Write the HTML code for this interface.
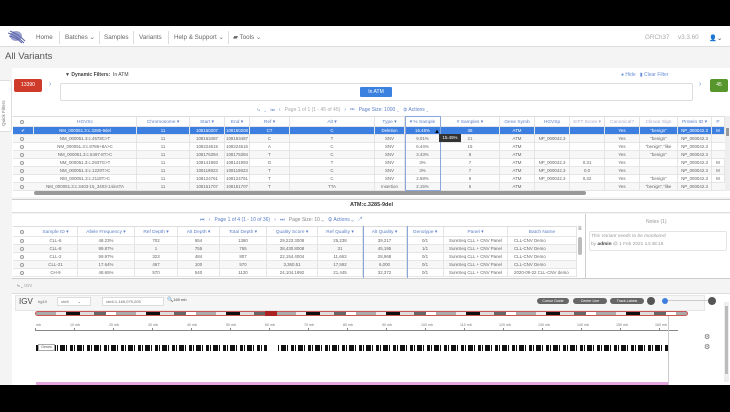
<!DOCTYPE html>
<html><head><meta charset="utf-8"><style>
*{box-sizing:border-box;margin:0;padding:0}
body{width:730px;height:412px;overflow:hidden;background:#f4f4f4;font-family:"Liberation Sans",sans-serif;position:relative;color:#555}
.a{position:absolute}
.row{position:absolute;left:13px;height:8px;border-bottom:1px solid #e6e6e6;background:#fff}
.row.alt{background:#f7f7f7}
.c{position:absolute;top:0;height:8px;font-size:4.4px;line-height:8px;text-align:center;white-space:nowrap;overflow:hidden;color:#666;border-right:1px solid #e4e4e4}
.h .c{color:#5b7fc7;height:11px;line-height:11px;font-size:4.8px}
.cb{position:absolute;left:7px;top:2px;width:4px;height:4px;border:0.6px solid #999;border-radius:50%;background:#fff}
.nav{font-size:6.3px;color:#666;top:34px}
.sep{top:31px;width:1px;height:13px;background:#ddd}
.btn{background:#666;color:#fff;border-radius:4px;font-size:3.6px;text-align:center;line-height:6px;height:6px}
.rl{position:absolute;top:323px;font-size:3.6px;color:#777}
</style></head><body>
<div class="a" style="left:0;top:0;width:730px;height:26px;background:#000"></div>
<div class="a" style="left:0;top:26px;width:730px;height:21px;background:#fff;border-bottom:1px solid #ddd"></div>
<svg class="a" style="left:6px;top:29px" width="20" height="16"><ellipse cx="10" cy="7" rx="6" ry="5" fill="#9aa0d0"/><path d="M2 4 Q10 6 18 14 M3 7 Q10 8 16 14 M4 2 Q12 5 19 12" stroke="#5a63a8" stroke-width="1" fill="none"/></svg>
<div class="a nav" style="left:36px">Home</div><div class="a sep" style="left:59px"></div>
<div class="a nav" style="left:65px">Batches ⌄</div><div class="a sep" style="left:99px"></div>
<div class="a nav" style="left:104px">Samples</div><div class="a sep" style="left:133px"></div>
<div class="a nav" style="left:139px">Variants</div><div class="a sep" style="left:168px"></div>
<div class="a nav" style="left:174px">Help &amp; Support ⌄</div><div class="a sep" style="left:228px"></div>
<div class="a nav" style="left:233px">▰ Tools ⌄</div>
<div class="a nav" style="left:645px;color:#aaa">GRCh37</div>
<div class="a nav" style="left:678px;color:#aaa">v3.3.60</div>
<div class="a nav" style="left:709px;color:#444">👤⌄</div>
<div class="a" style="left:5px;top:51px;font-size:9.5px;color:#555">All Variants</div>
<div class="a" style="left:12px;top:68px;width:718px;height:37px;background:#fff"></div>
<div class="a" style="left:0;top:80px;width:12px;height:52px;background:#fff;border:1px solid #ddd;border-left:none;border-radius:0 3px 3px 0"></div>
<div class="a" style="left:1px;top:126px;font-size:4.6px;color:#777;transform:rotate(-90deg);transform-origin:0 0;white-space:nowrap">Quick Filters</div>
<div class="a" style="left:14px;top:79px;width:28px;height:13px;background:#cf3b2b;border-radius:2px;color:#fff;font-size:5px;text-align:center;line-height:13px">13390</div>
<div class="a" style="left:49px;top:81px;font-size:7px;color:#6a9ae0">›</div>
<div class="a" style="left:65px;top:72px;font-size:5px;color:#444"><b>▼ Dynamic Filters:</b> &nbsp;In ATM</div>
<div class="a" style="left:621px;top:72px;font-size:5px;color:#6a8fd8">● Hide &nbsp; ▮ Clear Filter</div>
<div class="a" style="left:60px;top:83px;width:633px;height:18px;border:1px solid #ddd;background:#fff;border-radius:2px"></div>
<div class="a" style="left:360px;top:87px;width:32px;height:10px;background:#3b82e0;color:#fff;font-size:5px;text-align:center;line-height:10px;border-radius:1px">In ATM</div>
<div class="a" style="left:699px;top:81px;font-size:7px;color:#6a9ae0">›</div>
<div class="a" style="left:710px;top:79px;width:18px;height:13px;background:#57962d;color:#fff;font-size:5px;text-align:center;line-height:13px;border-radius:2px">45</div>
<div class="a" style="left:12px;top:105px;width:718px;height:92px;background:#fff"></div>
<div class="a" style="left:257px;top:107px;font-size:5px;color:#5b7fc7">⤷ &nbsp; ⌄ &nbsp; ⏮ &nbsp; ‹ &nbsp; <span style="color:#aaa">Page 1 of 1 (1 - 45 of 45)</span> &nbsp; › &nbsp; ⏭ &nbsp; Page Size: 1000 ⌄ &nbsp; ⚙ Actions ⌄</div>
<div class="row h" style="top:116px;height:11px;width:712px;background:#fff;border-top:1px solid #ddd">
<div class="cb" style="top:3px"></div>
<div class="c" style="left:21px;width:103px">HGVSc</div><div class="c" style="left:124px;width:53px">Chromosome ▾</div><div class="c" style="left:177px;width:35px">Start ▾</div><div class="c" style="left:212px;width:25px">End ▾</div><div class="c" style="left:237px;width:40px">Ref ▾</div><div class="c" style="left:277px;width:85px">Alt ▾</div><div class="c" style="left:362px;width:30px">Type ▾</div><div class="c" style="left:392px;width:36px">▾ % Sample</div><div class="c" style="left:428px;width:59px"># Samples ▾</div><div class="c" style="left:487px;width:35px">Gene Symb</div><div class="c" style="left:522px;width:35px">HGVSp</div><div class="c" style="left:557px;width:35px;color:#aac">SIFT Score ▾</div><div class="c" style="left:592px;width:35px;color:#aac">Canonical?</div><div class="c" style="left:627px;width:38px;color:#aac">Clinvar Sign</div><div class="c" style="left:665px;width:34px">Protein ID ▾</div><div class="c" style="left:699px;width:13px">P</div></div>
<div class="row" style="top:127px;width:712px;background:#3d7fe0"><div class="c" style="left:0;width:21px;color:#fff">✔</div><div class="c" style="left:21px;width:103px;color:#fff">NM_000051.3:c.3285-9del</div><div class="c" style="left:124px;width:53px;color:#fff">11</div><div class="c" style="left:177px;width:35px;color:#fff">108150207</div><div class="c" style="left:212px;width:25px;color:#fff">108150208</div><div class="c" style="left:237px;width:40px;color:#fff">CT</div><div class="c" style="left:277px;width:85px;color:#fff">C</div><div class="c" style="left:362px;width:30px;color:#fff">Deletion</div><div class="c" style="left:392px;width:36px;color:#fff">15.45%</div><div class="c" style="left:428px;width:59px;color:#fff">36</div><div class="c" style="left:487px;width:35px;color:#fff">ATM</div><div class="c" style="left:522px;width:35px"></div><div class="c" style="left:557px;width:35px"></div><div class="c" style="left:592px;width:35px;color:#fff">Yes</div><div class="c" style="left:627px;width:38px;color:#fff">"benign"</div><div class="c" style="left:665px;width:34px;color:#fff">NP_000042.3</div><div class="c" style="left:699px;width:13px;color:#fff">M</div></div>
<div class="row alt" style="top:135px;width:712px"><div class="cb"></div><div class="c" style="left:21px;width:103px">NM_000051.3:c.4578C&gt;T</div><div class="c" style="left:124px;width:53px">11</div><div class="c" style="left:177px;width:35px">108163487</div><div class="c" style="left:212px;width:25px">108163487</div><div class="c" style="left:237px;width:40px">C</div><div class="c" style="left:277px;width:85px">T</div><div class="c" style="left:362px;width:30px">SNV</div><div class="c" style="left:392px;width:36px">9.01%</div><div class="c" style="left:428px;width:59px">21</div><div class="c" style="left:487px;width:35px">ATM</div><div class="c" style="left:522px;width:35px">NP_000042.3</div><div class="c" style="left:557px;width:35px"></div><div class="c" style="left:592px;width:35px">Yes</div><div class="c" style="left:627px;width:38px">"benign"</div><div class="c" style="left:665px;width:34px">NP_000042.3</div></div>
<div class="row" style="top:143px;width:712px"><div class="cb"></div><div class="c" style="left:21px;width:103px">NM_000051.3:c.8786+8A&gt;C</div><div class="c" style="left:124px;width:53px">11</div><div class="c" style="left:177px;width:35px">108224615</div><div class="c" style="left:212px;width:25px">108224615</div><div class="c" style="left:237px;width:40px">A</div><div class="c" style="left:277px;width:85px">C</div><div class="c" style="left:362px;width:30px">SNV</div><div class="c" style="left:392px;width:36px">6.44%</div><div class="c" style="left:428px;width:59px">15</div><div class="c" style="left:487px;width:35px">ATM</div><div class="c" style="left:522px;width:35px"></div><div class="c" style="left:557px;width:35px"></div><div class="c" style="left:592px;width:35px">Yes</div><div class="c" style="left:627px;width:38px">"benign","like</div><div class="c" style="left:665px;width:34px">NP_000042.3</div></div>
<div class="row alt" style="top:151px;width:712px"><div class="cb"></div><div class="c" style="left:21px;width:103px">NM_000051.3:c.5497-8T&gt;C</div><div class="c" style="left:124px;width:53px">11</div><div class="c" style="left:177px;width:35px">108175394</div><div class="c" style="left:212px;width:25px">108175394</div><div class="c" style="left:237px;width:40px">T</div><div class="c" style="left:277px;width:85px">C</div><div class="c" style="left:362px;width:30px">SNV</div><div class="c" style="left:392px;width:36px">3.43%</div><div class="c" style="left:428px;width:59px">8</div><div class="c" style="left:487px;width:35px">ATM</div><div class="c" style="left:522px;width:35px"></div><div class="c" style="left:557px;width:35px"></div><div class="c" style="left:592px;width:35px">Yes</div><div class="c" style="left:627px;width:38px">"benign"</div><div class="c" style="left:665px;width:34px">NP_000042.3</div></div>
<div class="row" style="top:159px;width:712px"><div class="cb"></div><div class="c" style="left:21px;width:103px">NM_000051.3:c.2937G&gt;T</div><div class="c" style="left:124px;width:53px">11</div><div class="c" style="left:177px;width:35px">108141993</div><div class="c" style="left:212px;width:25px">108141993</div><div class="c" style="left:237px;width:40px">G</div><div class="c" style="left:277px;width:85px">T</div><div class="c" style="left:362px;width:30px">SNV</div><div class="c" style="left:392px;width:36px">3%</div><div class="c" style="left:428px;width:59px">7</div><div class="c" style="left:487px;width:35px">ATM</div><div class="c" style="left:522px;width:35px">NP_000042.3</div><div class="c" style="left:557px;width:35px">0.31</div><div class="c" style="left:592px;width:35px">Yes</div><div class="c" style="left:627px;width:38px"></div><div class="c" style="left:665px;width:34px">NP_000042.3</div><div class="c" style="left:699px;width:13px">M</div></div>
<div class="row alt" style="top:167px;width:712px"><div class="cb"></div><div class="c" style="left:21px;width:103px">NM_000051.3:c.1229T&gt;C</div><div class="c" style="left:124px;width:53px">11</div><div class="c" style="left:177px;width:35px">108119823</div><div class="c" style="left:212px;width:25px">108119823</div><div class="c" style="left:237px;width:40px">T</div><div class="c" style="left:277px;width:85px">C</div><div class="c" style="left:362px;width:30px">SNV</div><div class="c" style="left:392px;width:36px">3%</div><div class="c" style="left:428px;width:59px">7</div><div class="c" style="left:487px;width:35px">ATM</div><div class="c" style="left:522px;width:35px">NP_000042.3</div><div class="c" style="left:557px;width:35px">0.0</div><div class="c" style="left:592px;width:35px">Yes</div><div class="c" style="left:627px;width:38px"></div><div class="c" style="left:665px;width:34px">NP_000042.3</div><div class="c" style="left:699px;width:13px">M</div></div>
<div class="row" style="top:175px;width:712px"><div class="cb"></div><div class="c" style="left:21px;width:103px">NM_000051.3:c.2119T&gt;C</div><div class="c" style="left:124px;width:53px">11</div><div class="c" style="left:177px;width:35px">108124761</div><div class="c" style="left:212px;width:25px">108124761</div><div class="c" style="left:237px;width:40px">T</div><div class="c" style="left:277px;width:85px">C</div><div class="c" style="left:362px;width:30px">SNV</div><div class="c" style="left:392px;width:36px">2.58%</div><div class="c" style="left:428px;width:59px">6</div><div class="c" style="left:487px;width:35px">ATM</div><div class="c" style="left:522px;width:35px">NP_000042.3</div><div class="c" style="left:557px;width:35px">0.32</div><div class="c" style="left:592px;width:35px">Yes</div><div class="c" style="left:627px;width:38px">"benign"</div><div class="c" style="left:665px;width:34px">NP_000042.3</div><div class="c" style="left:699px;width:13px">M</div></div>
<div class="row alt" style="top:183px;width:712px"><div class="cb"></div><div class="c" style="left:21px;width:103px">NM_000051.3:c.3403-15_3403-14insTA</div><div class="c" style="left:124px;width:53px">11</div><div class="c" style="left:177px;width:35px">108151707</div><div class="c" style="left:212px;width:25px">108151707</div><div class="c" style="left:237px;width:40px">T</div><div class="c" style="left:277px;width:85px">TTA</div><div class="c" style="left:362px;width:30px">Insertion</div><div class="c" style="left:392px;width:36px">2.15%</div><div class="c" style="left:428px;width:59px">5</div><div class="c" style="left:487px;width:35px">ATM</div><div class="c" style="left:522px;width:35px"></div><div class="c" style="left:557px;width:35px"></div><div class="c" style="left:592px;width:35px">Yes</div><div class="c" style="left:627px;width:38px">"benign","like</div><div class="c" style="left:665px;width:34px">NP_000042.3</div></div>
<div class="a" style="left:405px;top:116px;width:36px;height:75px;border:1px solid #8aa6dc"></div>
<div class="a" style="left:439px;top:134px;width:22px;height:8px;background:#333;color:#fff;font-size:4.4px;line-height:8px;text-align:center">15.45%</div>
<div class="a" style="left:434px;top:129px;font-size:6px;color:#000">▲</div>
<div class="a" style="left:725px;top:116px;width:5px;height:75px;background:#eee"></div><div class="a" style="left:726px;top:128px;width:3px;height:8px;background:#999"></div>
<div class="a" style="left:34px;top:191px;width:552px;height:4px;background:#999;border-radius:2px"></div>
<div class="a" style="left:12px;top:199px;width:718px;height:14px;background:#fff;border-top:1px solid #ccc;border-bottom:1px solid #ddd"></div>
<div class="a" style="left:350px;top:202px;font-size:5.5px;color:#333;font-weight:bold">ATM:c.3285-9del</div>
<div class="a" style="left:12px;top:214px;width:573px;height:64px;background:#fff"></div>
<div class="a" style="left:200px;top:217px;font-size:5px;color:#5b7fc7">⏮ &nbsp; ‹ &nbsp; Page 1 of 4 (1 - 10 of 36) &nbsp; › &nbsp; ⏭ &nbsp; <span style="color:#888">Page Size: 10 ⌄</span> &nbsp; ⚙ Actions ⌄ &nbsp; ↗</div>
<div class="row h" style="top:226px;height:11px;width:564px;border-top:1px solid #ddd"><div class="cb" style="top:3px"></div>
<div class="c" style="left:21px;width:44px">Sample ID ▾</div><div class="c" style="left:65px;width:57px">Allele Frequency ▾</div><div class="c" style="left:122px;width:43px">Ref Depth ▾</div><div class="c" style="left:165px;width:42px">Alt Depth ▾</div><div class="c" style="left:207px;width:47px">Total Depth ▾</div><div class="c" style="left:254px;width:51px">Quality Score ▾</div><div class="c" style="left:305px;width:45px">Ref Quality ▾</div><div class="c" style="left:350px;width:44px">Alt Quality ▾</div><div class="c" style="left:394px;width:37px">Genotype ▾</div><div class="c" style="left:431px;width:64px">Panel ▾</div><div class="c" style="left:495px;width:69px">Batch Name</div></div>
<div class="row" style="top:237px;width:564px"><div class="cb"></div><div class="c" style="left:21px;width:44px">CLL-6</div><div class="c" style="left:65px;width:57px">48.23%</div><div class="c" style="left:122px;width:43px">702</div><div class="c" style="left:165px;width:42px">654</div><div class="c" style="left:207px;width:47px">1360</div><div class="c" style="left:254px;width:51px">29,223.3008</div><div class="c" style="left:305px;width:45px">25,238</div><div class="c" style="left:350px;width:44px">39,217</div><div class="c" style="left:394px;width:37px">0/1</div><div class="c" style="left:431px;width:64px">SureSeq CLL + CNV Panel</div><div class="c" style="left:495px;width:69px;text-align:left;padding-left:6px">CLL-CNV Demo</div></div>
<div class="row alt" style="top:245px;width:564px"><div class="cb"></div><div class="c" style="left:21px;width:44px">CLL-8</div><div class="c" style="left:65px;width:57px">99.87%</div><div class="c" style="left:122px;width:43px">1</div><div class="c" style="left:165px;width:42px">755</div><div class="c" style="left:207px;width:47px">765</div><div class="c" style="left:254px;width:51px">38,430.8008</div><div class="c" style="left:305px;width:45px">31</div><div class="c" style="left:350px;width:44px">45,195</div><div class="c" style="left:394px;width:37px">1/1</div><div class="c" style="left:431px;width:64px">SureSeq CLL + CNV Panel</div><div class="c" style="left:495px;width:69px;text-align:left;padding-left:6px">CLL-CNV Demo</div></div>
<div class="row" style="top:253px;width:564px"><div class="cb"></div><div class="c" style="left:21px;width:44px">CLL-2</div><div class="c" style="left:65px;width:57px">59.97%</div><div class="c" style="left:122px;width:43px">323</div><div class="c" style="left:165px;width:42px">484</div><div class="c" style="left:207px;width:47px">807</div><div class="c" style="left:254px;width:51px">22,154.4004</div><div class="c" style="left:305px;width:45px">11,663</div><div class="c" style="left:350px;width:44px">28,968</div><div class="c" style="left:394px;width:37px">0/1</div><div class="c" style="left:431px;width:64px">SureSeq CLL + CNV Panel</div><div class="c" style="left:495px;width:69px;text-align:left;padding-left:6px">CLL-CNV Demo</div></div>
<div class="row alt" style="top:261px;width:564px"><div class="cb"></div><div class="c" style="left:21px;width:44px">CLL-21</div><div class="c" style="left:65px;width:57px">17.64%</div><div class="c" style="left:122px;width:43px">467</div><div class="c" style="left:165px;width:42px">100</div><div class="c" style="left:207px;width:47px">570</div><div class="c" style="left:254px;width:51px">3,360.51</div><div class="c" style="left:305px;width:45px">17,592</div><div class="c" style="left:350px;width:44px">6,000</div><div class="c" style="left:394px;width:37px">0/1</div><div class="c" style="left:431px;width:64px">SureSeq CLL + CNV Panel</div><div class="c" style="left:495px;width:69px;text-align:left;padding-left:6px">CLL-CNV Demo</div></div>
<div class="row" style="top:269px;width:564px"><div class="cb"></div><div class="c" style="left:21px;width:44px">CH-9</div><div class="c" style="left:65px;width:57px">48.65%</div><div class="c" style="left:122px;width:43px">570</div><div class="c" style="left:165px;width:42px">540</div><div class="c" style="left:207px;width:47px">1120</div><div class="c" style="left:254px;width:51px">24,104.1992</div><div class="c" style="left:305px;width:45px">21,445</div><div class="c" style="left:350px;width:44px">32,372</div><div class="c" style="left:394px;width:37px">0/1</div><div class="c" style="left:431px;width:64px">SureSeq CLL + CNV Panel</div><div class="c" style="left:495px;width:69px;text-align:left;padding-left:6px">2020-09-22 CLL-CNV demo</div></div>
<div class="a" style="left:363px;top:226px;width:1px;height:52px;background:#8aa6dc"></div>
<div class="a" style="left:407px;top:226px;width:1px;height:52px;background:#8aa6dc"></div>
<div class="a" style="left:578px;top:226px;font-size:6px;color:#555">≡</div>
<div class="a" style="left:578px;top:237px;width:4px;height:18px;background:#bbb;border-radius:2px"></div>
<div class="a" style="left:585px;top:214px;width:145px;height:64px;background:#fff;border-left:1px solid #ccc"></div>
<div class="a" style="left:646px;top:219px;font-size:5px;color:#999">Notes (1)</div>
<div class="a" style="left:589px;top:231px;width:138px;height:20px;border:1px solid #e4e4e4;border-radius:2px"></div>
<div class="a" style="left:591px;top:234px;font-size:4.8px;color:#999;font-style:italic">This Variant needs to be monitored</div>
<div class="a" style="left:591px;top:242px;font-size:4.8px;color:#999">by <b style="color:#444">admin</b> @ 1 Feb 2021 14:48:16</div>
<div class="a" style="left:12px;top:278px;width:718px;height:15px;background:#f4f4f4;border-top:1px solid #ccc"></div>
<div class="a" style="left:17px;top:283px;font-size:4.6px;color:#555">⤷ ⌄ <span style="color:#999">IGV</span></div>
<div class="a" style="left:12px;top:293px;width:718px;height:92px;background:#fff;border-top:1px solid #ddd"></div>
<div class="a" style="left:15px;top:295px;width:690px;height:16px;background:#f6f6f6;border:1px solid #e6e6e6"></div>
<div class="a" style="left:19px;top:297px;font-size:8px;color:#444">IGV</div>
<div class="a" style="left:38px;top:299px;font-size:4px;color:#666">hg19</div>
<div class="a" style="left:57px;top:297px;width:34px;height:9px;background:#fff;border:1px solid #ddd;font-size:4px;line-height:8px;padding-left:3px;color:#666">chr6 &nbsp; &nbsp; &nbsp; &nbsp;⌄</div>
<div class="a" style="left:102px;top:297px;width:62px;height:9px;background:#fff;border:1px solid #ddd;font-size:4px;line-height:8px;padding-left:3px;color:#666">chr6:1-169,079,205</div>
<div class="a" style="left:167px;top:297px;font-size:5px;color:#444">🔍<span style="font-size:4px">169 mb</span></div>
<div class="a btn" style="left:537px;top:298px;width:32px">Cursor Guide</div>
<div class="a btn" style="left:573px;top:298px;width:34px">Center Line</div>
<div class="a btn" style="left:610px;top:298px;width:34px">Track Labels</div>
<div class="a" style="left:647px;top:297px;width:8px;height:8px;border-radius:50%;background:#555"></div>
<div class="a" style="left:662px;top:298px;width:6px;height:6px;border-radius:50%;background:#3d7fe0"></div>
<div class="a" style="left:668px;top:300px;width:40px;height:1px;background:#ccc"></div>
<div class="a" style="left:708px;top:297px;width:8px;height:8px;border-radius:50%;background:#555"></div>
<div class="a" style="left:35px;top:311px;width:653px;height:5px;border:1px solid #c55;border-radius:3px;background:repeating-linear-gradient(90deg,#aaa 0 20px,#eee 20px 30px,#111 30px 44px,#ddd 44px 58px,#666 58px 70px,#fff 70px 80px)"></div>
<div class="a" style="left:265px;top:311px;width:12px;height:5px;background:#a22"></div>
<div class="a" style="left:35px;top:330px;width:643px;height:1px;background:#888"></div>
<div class="a" style="left:35px;top:323px;width:643px;height:7px;background:repeating-linear-gradient(90deg,#888 0 1px,transparent 1px 39px) bottom/100% 2px no-repeat"></div>
<div class="rl" style="left:36px">mb</div><div class="rl" style="left:70px">10 mb</div><div class="rl" style="left:109px">20 mb</div><div class="rl" style="left:148px">30 mb</div><div class="rl" style="left:187px">40 mb</div><div class="rl" style="left:226px">50 mb</div><div class="rl" style="left:265px">60 mb</div><div class="rl" style="left:304px">70 mb</div><div class="rl" style="left:343px">80 mb</div><div class="rl" style="left:382px">90 mb</div><div class="rl" style="left:421px">100 mb</div><div class="rl" style="left:460px">110 mb</div><div class="rl" style="left:499px">120 mb</div><div class="rl" style="left:538px">130 mb</div><div class="rl" style="left:577px">140 mb</div><div class="rl" style="left:616px">150 mb</div><div class="rl" style="left:655px">160 mb</div>
<div class="a" style="left:36px;top:345px;width:632px;height:6px;background:repeating-linear-gradient(90deg,#111 0 3px,#fff 3px 4px,#111 4px 5px,#fff 5px 7px,#111 7px 12px,#fff 12px 13px,#111 13px 14px,#fff 14px 17px)"></div>
<div class="a" style="left:267px;top:345px;width:11px;height:6px;background:#fff"></div>
<div class="a" style="left:38px;top:344px;width:17px;height:7px;background:#fff;border:1px solid #aaa;font-size:3.6px;line-height:5px;text-align:center">Genes</div>
<div class="a" style="left:36px;top:382px;width:632px;height:3px;background:#e4a6e0"></div>
<div class="a" style="left:668px;top:316px;width:1px;height:69px;background:#ccc"></div>
<div class="a" style="left:704px;top:333px;font-size:7px;color:#666">⚙</div>
<div class="a" style="left:704px;top:343px;font-size:7px;color:#666">⚙</div>
<div class="a" style="left:724px;top:302px;width:5px;height:80px;background:#eee"></div>
<div class="a" style="left:725px;top:306px;width:3px;height:68px;background:#bbb"></div>
<div class="a" style="left:0;top:385px;width:730px;height:27px;background:#000"></div>
</body></html>
